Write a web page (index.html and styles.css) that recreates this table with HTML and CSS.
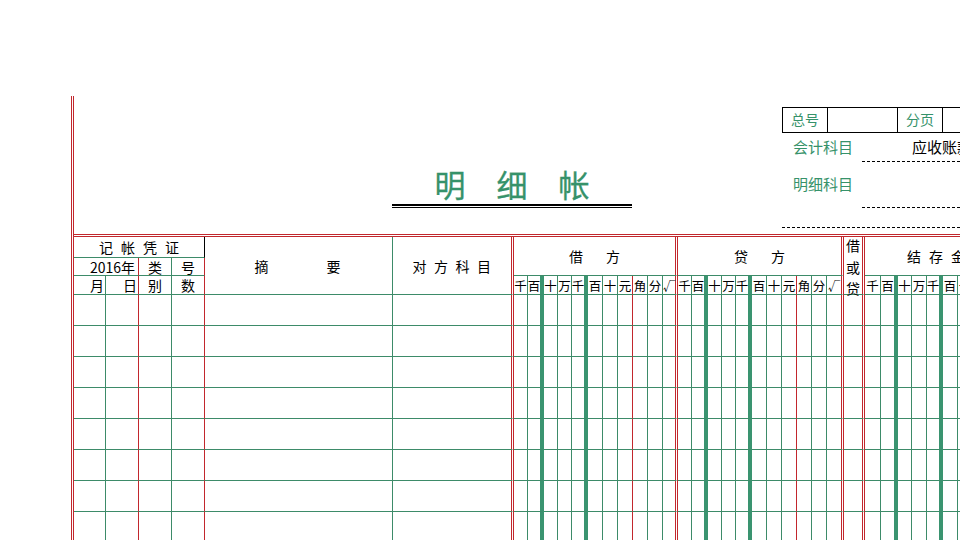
FILE: index.html
```html
<!DOCTYPE html>
<html lang="zh-CN">
<head>
<meta charset="utf-8">
<title>明细帐</title>
<link rel="stylesheet" href="styles.css">
</head>
<body>
<div class="sheet">
  <header class="top">
    <div class="title-block">
      <h1 class="title">明细帐</h1>
      <div class="title-rule"></div>
    </div>
    <div class="info">
      <div class="info-box">
        <div class="ib-cell ib-label">总号</div>
        <div class="ib-cell ib-wide"></div>
        <div class="ib-cell ib-label">分页</div>
        <div class="ib-cell ib-rest"></div>
      </div>
      <div class="info-row row-a">
        <div class="info-label">会计科目</div>
        <div class="info-value">应收账款</div>
      </div>
      <div class="info-row row-b">
        <div class="info-label">明细科目</div>
        <div class="info-value"></div>
      </div>
      <div class="info-rule"></div>
    </div>
  </header>

  <section class="ledger">
    <div class="grid head">
      <div class="c s4 k pz">记帐凭证</div>
      <div class="c rs3 zy">摘要</div>
      <div class="c rs3 d df">对方科目</div>
      <div class="c s11 rs2 d fx">借方</div>
      <div class="c s11 rs2 d fx">贷方</div>
      <div class="c rs3 d jd">借<br>或<br>贷</div>
      <div class="c s11 rs2 d jc">结存金额</div>

      <div class="c s2 r yr">2016年</div>
      <div class="c">类</div>
      <div class="c r">号</div>

      <div class="c ar">月</div>
      <div class="c r ar">日</div>
      <div class="c">别</div>
      <div class="c r">数</div>

      <div class="c n">千</div><div class="c n t">百</div><div class="c n">十</div><div class="c n">万</div><div class="c n t">千</div><div class="c n">百</div><div class="c n">十</div><div class="c n r">元</div><div class="c n">角</div><div class="c n">分</div><div class="c n d">√</div>
      <div class="c n">千</div><div class="c n t">百</div><div class="c n">十</div><div class="c n">万</div><div class="c n t">千</div><div class="c n">百</div><div class="c n">十</div><div class="c n r">元</div><div class="c n">角</div><div class="c n">分</div><div class="c n d">√</div>
      <div class="c n">千</div><div class="c n t">百</div><div class="c n">十</div><div class="c n">万</div><div class="c n t">千</div><div class="c n">百</div><div class="c n">十</div><div class="c n r">元</div><div class="c n">角</div><div class="c n">分</div><div class="c n d">√</div>
    </div>

    <div class="grid rows">
      <span></span><span></span><span></span><span></span><span></span><span></span><span></span><span></span><span></span><span></span><span></span><span></span><span></span><span></span><span></span><span></span><span></span><span></span><span></span><span></span><span></span><span></span><span></span><span></span><span></span><span></span><span></span><span></span><span></span><span></span><span></span><span></span><span></span><span></span><span></span><span></span><span></span><span></span><span></span><span></span>
      <span></span><span></span><span></span><span></span><span></span><span></span><span></span><span></span><span></span><span></span><span></span><span></span><span></span><span></span><span></span><span></span><span></span><span></span><span></span><span></span><span></span><span></span><span></span><span></span><span></span><span></span><span></span><span></span><span></span><span></span><span></span><span></span><span></span><span></span><span></span><span></span><span></span><span></span><span></span><span></span>
      <span></span><span></span><span></span><span></span><span></span><span></span><span></span><span></span><span></span><span></span><span></span><span></span><span></span><span></span><span></span><span></span><span></span><span></span><span></span><span></span><span></span><span></span><span></span><span></span><span></span><span></span><span></span><span></span><span></span><span></span><span></span><span></span><span></span><span></span><span></span><span></span><span></span><span></span><span></span><span></span>
      <span></span><span></span><span></span><span></span><span></span><span></span><span></span><span></span><span></span><span></span><span></span><span></span><span></span><span></span><span></span><span></span><span></span><span></span><span></span><span></span><span></span><span></span><span></span><span></span><span></span><span></span><span></span><span></span><span></span><span></span><span></span><span></span><span></span><span></span><span></span><span></span><span></span><span></span><span></span><span></span>
      <span></span><span></span><span></span><span></span><span></span><span></span><span></span><span></span><span></span><span></span><span></span><span></span><span></span><span></span><span></span><span></span><span></span><span></span><span></span><span></span><span></span><span></span><span></span><span></span><span></span><span></span><span></span><span></span><span></span><span></span><span></span><span></span><span></span><span></span><span></span><span></span><span></span><span></span><span></span><span></span>
      <span></span><span></span><span></span><span></span><span></span><span></span><span></span><span></span><span></span><span></span><span></span><span></span><span></span><span></span><span></span><span></span><span></span><span></span><span></span><span></span><span></span><span></span><span></span><span></span><span></span><span></span><span></span><span></span><span></span><span></span><span></span><span></span><span></span><span></span><span></span><span></span><span></span><span></span><span></span><span></span>
      <span></span><span></span><span></span><span></span><span></span><span></span><span></span><span></span><span></span><span></span><span></span><span></span><span></span><span></span><span></span><span></span><span></span><span></span><span></span><span></span><span></span><span></span><span></span><span></span><span></span><span></span><span></span><span></span><span></span><span></span><span></span><span></span><span></span><span></span><span></span><span></span><span></span><span></span><span></span><span></span>
      <span></span><span></span><span></span><span></span><span></span><span></span><span></span><span></span><span></span><span></span><span></span><span></span><span></span><span></span><span></span><span></span><span></span><span></span><span></span><span></span><span></span><span></span><span></span><span></span><span></span><span></span><span></span><span></span><span></span><span></span><span></span><span></span><span></span><span></span><span></span><span></span><span></span><span></span><span></span><span></span>
    </div>
  </section>
</div>
</body>
</html>
```

FILE: styles.css
```css
:root {
  --g: #3d8b69;
  --gt: #3a9470;
  --r: #c2272d;
  --tg: #36926a;
  --cols: 32px 33px 33px 33px 188px 121px
          14px 16px 14px 14px 16px 15px 15px 15px 15px 15px 15px
          14px 16px 14px 14px 16px 15px 15px 15px 15px 15px 17px
          21px
          16px 17px 14px 15px 16px 15px 15px 15px 15px 15px 15px;
}

* { box-sizing: border-box; }

html, body {
  margin: 0;
  padding: 0;
  width: 960px;
  height: 540px;
  overflow: hidden;
  background: #fff;
}

body {
  font-family: "Noto Sans CJK SC", "Liberation Sans", sans-serif;
  color: #000;
}

/* the sheet carries the double red rule on its left edge */
.sheet {
  margin: 96px 0 0 71px;
  width: max-content;
  padding-left: 3px;
  background: linear-gradient(90deg, var(--r) 0 1px, #fff 1px 2px, var(--r) 2px 3px) left top / 3px 100% no-repeat;
}

/* ---------- top area ---------- */
.top {
  display: flex;
  height: 138px;
}

.title-block {
  margin-left: 318px;
  width: 240px;
  padding-top: 72px;
}

.title {
  margin: 0;
  font-size: 31px;
  line-height: 32px;
  font-weight: normal;
  letter-spacing: 31px;
  padding-left: 31px;
  text-align: center;
  color: var(--tg);
  -webkit-text-stroke: 0.3px var(--tg);
}

.title-rule {
  margin-top: 4px;
  height: 4px;
  border-top: 2px solid #000;
  border-bottom: 1px solid #000;
}

.info {
  margin-left: 150px;
  padding-top: 11px;
  width: 240px;
}

.info-box {
  display: flex;
  height: 26px;
  border: 1px solid #000;
}

.ib-cell {
  border-right: 1px solid #000;
  display: flex;
  align-items: center;
  justify-content: center;
  font-size: 14px;
  color: var(--tg);
  padding-bottom: 2px;
}
.ib-label { width: 45px; }
.ib-wide { width: 70px; }
.ib-rest { flex: 1; border-right: none; }

.info-row {
  display: flex;
  font-size: 15px;
}
.row-a { height: 29px; }
.row-b { height: 46px; }

.info-label {
  width: 80px;
  padding-left: 11px;
  display: flex;
  align-items: center;
  color: var(--tg);
  padding-bottom: 2px;
}

.row-b .info-label { padding-bottom: 4px; }

.info-value {
  flex: 1;
  padding-left: 50px;
  padding-bottom: 2px;
  display: flex;
  align-items: center;
  white-space: nowrap;
  background: repeating-linear-gradient(90deg, #000 0 3px, transparent 3px 5px) left bottom / 100% 1px no-repeat;
}

.info-rule {
  height: 20px;
  background: repeating-linear-gradient(90deg, #000 0 3px, transparent 3px 5px) left bottom / 100% 1px no-repeat;
}

/* ---------- ledger ---------- */
.ledger {
  border-top: 3px double var(--r);
}

.grid {
  display: grid;
  grid-template-columns: var(--cols);
}

.head {
  grid-template-rows: 21px 18px 19px;
}

.c {
  border-right: 1px solid var(--g);
  border-bottom: 1px solid var(--g);
  display: flex;
  align-items: center;
  justify-content: center;
  font-size: 14px;
  line-height: 1;
  white-space: nowrap;
  min-width: 0;
}

.s2 { grid-column: span 2; }
.s4 { grid-column: span 4; }
.s11 { grid-column: span 11; }
.rs2 { grid-row: span 2; }
.rs3 { grid-row: span 3; }

.r { border-right-color: var(--r); }
.k { border-right-color: #000; }
.t { border-right: 4px solid var(--gt); }
.d { border-right: 3px double var(--r); }

.pz { letter-spacing: 8px; padding-left: 8px; }
.zy { letter-spacing: 58px; padding-left: 56px; }
.df { letter-spacing: 7.5px; padding-left: 7px; }
.fx { letter-spacing: 23px; padding-left: 23px; }
.jc { letter-spacing: 8px; justify-content: flex-start; padding-left: 42px; }
.jd { line-height: 21.5px; padding-top: 4px; text-align: center; }
.yr { justify-content: flex-end; padding-right: 3px; }
.ar { justify-content: flex-end; padding-right: 1px; }
.n { font-size: 12.5px; padding-top: 3px; }

.rows {
  grid-auto-rows: 31px;
}

.rows > span {
  border-right: 1px solid var(--g);
  border-bottom: 1px solid var(--g);
}

.rows > span:nth-child(40n+2),
.rows > span:nth-child(40n+4),
.rows > span:nth-child(40n+14),
.rows > span:nth-child(40n+25),
.rows > span:nth-child(40n+37) {
  border-right-color: var(--r);
}

.rows > span:nth-child(40n+8),
.rows > span:nth-child(40n+11),
.rows > span:nth-child(40n+19),
.rows > span:nth-child(40n+22),
.rows > span:nth-child(40n+31),
.rows > span:nth-child(40n+34) {
  border-right: 4px solid var(--gt);
}

.rows > span:nth-child(40n+6),
.rows > span:nth-child(40n+17),
.rows > span:nth-child(40n+28),
.rows > span:nth-child(40n+29),
.rows > span:nth-child(40n) {
  border-right: 3px double var(--r);
}
```
